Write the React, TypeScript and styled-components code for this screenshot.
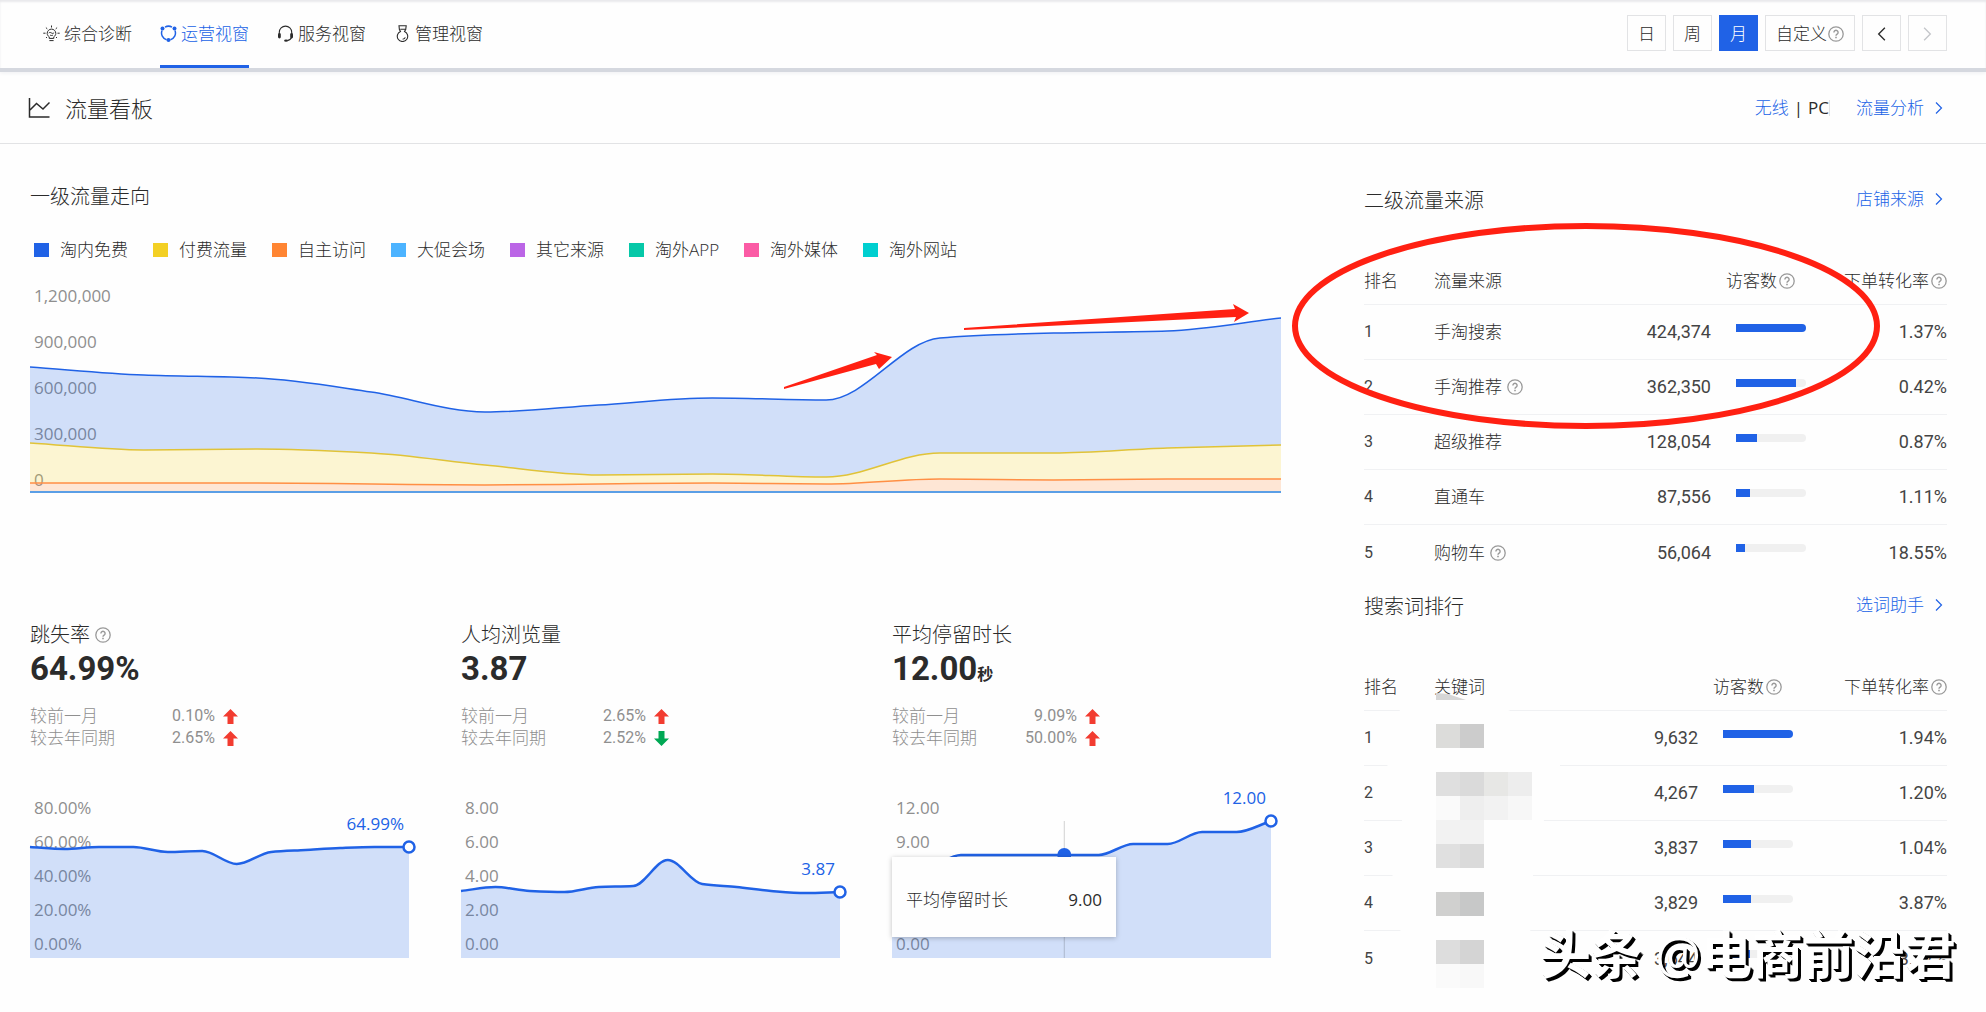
import React from "react";
import styled, { createGlobalStyle, css } from "styled-components";

const blue = "#2062e6";
const ink = "#2b2b2b";
const muted = "#8f8f8f";
const line = "#e2e3e5";
const marker = "#ff2012";
const textFont = `"Open Sans", "Noto Sans CJK SC", sans-serif`;
const digitFont = `Roboto, "Noto Sans CJK SC", sans-serif`;

const GlobalStyle = createGlobalStyle`
  * { box-sizing: border-box; }
  body {
    margin: 0;
    background: #fefefe;
    color: ${ink};
    font-family: ${textFont};
    font-size: 17px;
    font-weight: 300;
    line-height: 24px;
  }
  button { font: inherit; color: inherit; }
  a { color: inherit; text-decoration: none; }
  svg { display: block; flex: none; }
`;

/* ---------- shell ---------- */

const Page = styled.div`
  position: relative;
  padding-bottom: 26px;
  overflow: hidden;
`;

const TopBar = styled.header`
  display: flex;
  justify-content: space-between;
  height: 72px;
  padding: 0 39px 0 43px;
  border-bottom: 4px solid #d5d8df;
  box-shadow: inset 0 2px 2px #e9e9ec, 0 1px 4px #eeeff2;
`;

const Tabs = styled.nav`
  display: flex;
  gap: 28px;
`;

const Tab = styled.a<{ $active?: boolean }>`
  display: flex;
  align-items: center;
  gap: 4px;
  padding-top: 2px;
  border-bottom: 3px solid transparent;
  ${(p) =>
    p.$active &&
    css`
      color: ${blue};
      border-color: ${blue};
    `}
`;

const Periods = styled.div`
  display: flex;
  gap: 7px;
  padding-top: 15px;
`;

const PeriodButton = styled.button<{ $active?: boolean }>`
  display: flex;
  align-items: center;
  justify-content: center;
  gap: 1px;
  height: 36px;
  min-width: 39px;
  padding: 2px 10px 0;
  border: 1px solid ${(p) => (p.$active ? blue : line)};
  background: ${(p) => (p.$active ? blue : "transparent")};
  color: ${(p) => (p.$active ? "#ffffff" : ink)};
  &:disabled { color: #c4c6ca; }
`;

const BoardBar = styled.div`
  display: flex;
  justify-content: space-between;
  align-items: center;
  height: 72px;
  padding: 0 43px 0 28px;
  border-bottom: 1px solid ${line};
`;

const BoardTitle = styled.h1`
  display: flex;
  align-items: center;
  gap: 15px;
  margin: 0;
  font-size: 22px;
  font-weight: 300;
`;

const BoardLinks = styled.div`
  display: flex;
  align-items: center;
  gap: 26px;
`;

const Terminal = styled.div`
  display: flex;
  align-items: center;
  gap: 5px;
  line-height: 16px;
  border-right: 1px solid ${line};
`;

const TextButton = styled.button<{ $active?: boolean }>`
  padding: 0;
  border: 0;
  background: none;
  color: ${(p) => (p.$active ? blue : ink)};
`;

const Latin = styled.span`
  font-weight: 400;
`;

const MoreLink = styled.a`
  display: flex;
  align-items: center;
  gap: 11px;
  height: 24px;
  color: ${blue};
`;

const Board = styled.main`
  display: grid;
  grid-template-columns: minmax(0, 1251fr) minmax(0, 583fr);
  column-gap: 83px;
  padding: 0 39px 0 30px;
`;

const Heading = styled.h2`
  display: flex;
  align-items: center;
  gap: 5px;
  margin: 0;
  font-size: 20px;
  font-weight: 300;
  line-height: 28px;
`;

/* ---------- trend ---------- */

const Trend = styled.section`
  padding-top: 39px;
`;

const Legend = styled.ul`
  display: flex;
  gap: 25px;
  margin: 27px 0 19px;
  padding: 0 4px;
  list-style: none;
`;

const LegendItem = styled.li`
  display: flex;
  align-items: center;
  gap: 11px;
`;

const Swatch = styled.span<{ $color: string }>`
  width: 15px;
  height: 14px;
  background: ${(p) => p.$color};
`;

const Plot = styled.svg`
  width: 100%;
  height: auto;
  overflow: visible;
  font-size: 17px;
  font-weight: 400;
`;

const Metrics = styled.div`
  display: grid;
  grid-template-columns: repeat(3, minmax(0, 1fr));
  gap: 52px;
  margin-top: 124px;
  padding-right: 10px;
`;

const Metric = styled.section`
  position: relative;
`;

const MetricValue = styled.div`
  height: 40px;
  font: 700 33px/40px ${digitFont};
`;

const Unit = styled.small`
  font-size: 16px;
  line-height: 16px;
`;

const Deltas = styled.dl`
  margin: 16px 0 35px;
  color: ${muted};
  line-height: 22px;
`;

const Delta = styled.div`
  display: flex;
  align-items: center;
  gap: 8px;
`;

const DeltaName = styled.dt`
  width: 105px;
`;

const DeltaValue = styled.dd`
  width: 72px;
  margin: 0;
  font-family: ${digitFont};
  font-size: 16px;
  font-weight: 400;
  text-align: right;
`;

const Tooltip = styled.div`
  position: absolute;
  left: 0;
  bottom: 23px;
  display: flex;
  justify-content: space-between;
  align-items: center;
  width: 224px;
  height: 80px;
  padding: 6px 14px 0;
  background: #fefefe;
  box-shadow: 0 1px 5px rgba(0, 0, 0, 0.25);
`;

/* ---------- ranking ---------- */

const Side = styled.aside`
  position: relative;
  padding-top: 43px;
`;

const Panel = styled.section`
  position: relative;
  margin-bottom: 13px;
`;

const PanelHead = styled.div`
  display: flex;
  align-items: flex-start;
  justify-content: space-between;
  height: 28px;
  margin-bottom: 44px;
  padding-right: 4px;
`;

const Table = styled.table`
  width: 100%;
  table-layout: fixed;
  border-spacing: 0;
  tr > * {
    height: 55px;
    padding: 0;
    border-bottom: 1px solid #f0f1f3;
    font-weight: 300;
    text-align: left;
  }
  thead th {
    height: 46px;
    padding-bottom: 2px;
  }
  tbody tr:last-child > * { border-bottom: 0; }
`;

const RankCol = styled.col`
  width: 70px;
`;

const BarCol = styled.col`
  width: 95px;
`;

const RateCol = styled.col<{ $width: number }>`
  width: ${(p) => p.$width}px;
`;

const Label = styled.span<{ $gap: number; $inset?: number; $end?: boolean }>`
  display: flex;
  align-items: center;
  justify-content: ${(p) => (p.$end ? "flex-end" : "flex-start")};
  gap: ${(p) => p.$gap}px;
  padding-right: ${(p) => p.$inset || 0}px;
  white-space: nowrap;
`;

const Digits = styled.span<{ $size: number; $end?: boolean }>`
  display: block;
  font-family: ${digitFont};
  font-size: ${(p) => p.$size}px;
  font-weight: 400;
  color: #444444;
  text-align: ${(p) => (p.$end ? "right" : "left")};
`;

const Track = styled.div`
  width: 70px;
  height: 8px;
  margin: 0 0 9px 25px;
  border-radius: 0 4px 4px 0;
  background: #f0f0f0;
  overflow: hidden;
`;

const Bar = styled.div`
  height: 100%;
  background: ${blue};
`;

const Ring = styled.svg`
  position: absolute;
  left: -73px;
  top: 78px;
  pointer-events: none;
`;

const Mosaic = styled.svg`
  position: absolute;
  left: 22px;
  top: 98px;
  pointer-events: none;
`;

const Watermark = styled.div`
  position: absolute;
  right: 30px;
  bottom: 39px;
  color: #ffffff;
  font: 700 51px/64px "Open Sans", "Noto Sans CJK SC", sans-serif;
  text-shadow: 1px 1px 0 #000000, 2px 2px 0 #000000, 3px 3px 0 #000000;
  white-space: nowrap;
`;

const At = styled.span`
  font-weight: 400;
`;

/* ---------- icons ---------- */

const Help = () => (
  <svg width="16" height="16" viewBox="0 0 16 16" fill="none" stroke="#999" strokeWidth="1.3">
    <circle cx="8" cy="8" r="7.2" />
    <path d="M5.9 6.4a2.1 2.1 0 1 1 3.2 1.8c-.8.5-1.1.8-1.1 1.6" strokeWidth="1.4" />
    <path d="M8 10.8v1.5" strokeWidth="1.6" />
  </svg>
);

const Chevron = ({ back, size = 12 }: { back?: boolean; size?: number }) => (
  <svg width={size === 12 ? 8 : 9} height={size} viewBox="0 0 8 12" fill="none" stroke="currentColor" strokeWidth="1.2">
    <path d={back ? "M7 .5 1.5 6 7 11.5" : "M1 .5 6.5 6 1 11.5"} />
  </svg>
);

const BulbIcon = () => (
  <svg width="17" height="17" viewBox="0 0 17 17" fill="none" stroke="currentColor" strokeWidth="1">
    <path d="M6.2 11.8c-1.2-.8-2-2-2-3.4a4.3 4.3 0 0 1 8.6 0c0 1.4-.8 2.6-2 3.4v1.6H6.2zM6.4 15.6h4.2M5.8 8c1-.9 1.7-.6 2.7 0s1.7.5 2.6-.3M7 10c1 .7 2 .7 3 0" />
    <path d="M8.5.5v2M2.9 2.6l1.4 1.3M14.1 2.6l-1.400 1.300M.3 8.200h2.200M14.500 8.200h2.200M3 12.900l1-.8M14 12.900l-1-.8" />
  </svg>
);

const CycleIcon = () => (
  <svg width="17" height="17" viewBox="0 0 17 17" fill="none" stroke="currentColor" strokeWidth="1.500">
    <path d="M5 2.100a7.200 7.200 0 0 1 7 0M15 5.500a7 7 0 0 1-4.600 9.200M6.600 14.700A7 7 0 0 1 2 5.500" />
    <g fill="currentColor" stroke="none">
      <circle cx="2.500" cy="3.500" r="2" />
      <circle cx="14.500" cy="3.500" r="2" />
      <circle cx="8.500" cy="15" r="2" />
    </g>
  </svg>
);

const HeadsetIcon = () => (
  <svg width="17" height="17" viewBox="0 0 17 17" fill="none" stroke="currentColor" strokeWidth="1.100">
    <path d="M2.300 8.500V7.300a6.200 6.200 0 0 1 12.400 0v1.200M14.800 12c-.8 1.900-2.400 3.300-4.600 3.600" />
    <g fill="currentColor" stroke="none">
      <rect x="1" y="8" width="2.800" height="5.500" rx="1.400" />
      <rect x="13.200" y="8" width="2.800" height="5.500" rx="1.400" />
      <ellipse cx="9" cy="15.600" rx="1.900" ry="1.200" />
    </g>
  </svg>
);

const MedalIcon = () => (
  <svg width="17" height="17" viewBox="0 0 17 17" fill="none" stroke="currentColor" strokeWidth="1.100">
    <path d="M5 .8h7.200l-.5 3.700-1.200 2a5.200 5.200 0 1 1-4 0l-1.100-2zM6.300 4.200h4.800M8.600 14.200c1.300 0 2.300-.7 2.700-1.800" />
  </svg>
);

const TrendIcon = () => (
  <svg width="22" height="22" viewBox="0 0 22 22" fill="none" stroke="currentColor" strokeWidth="1.500">
    <path d="M1.500 1v19h20M2 13l6.500-6.500 6.500 5.500 6.500-6.500" />
  </svg>
);

const DeltaArrow = ({ down }: { down?: boolean }) => (
  <svg width="15" height="15" viewBox="0 0 15 15" fill={down ? "#00a854" : "#f23c30"}>
    <path d={down ? "M4.500 0h6v7.500H15L7.500 15 0 7.500h4.500z" : "M4.500 15h6V7.500H15L7.500 0 0 7.500h4.500z"} />
  </svg>
);

/* ---------- curves ---------- */

type Point = [number, number];

const spread = (ys: number[], width: number): Point[] =>
  ys.map((y, i) => [(i * width) / (ys.length - 1), y]);

/* Monotone cubic through the points, so that flat stretches stay flat. */
function curve(points: Point[]): string {
  const n = points.length;
  const slopes = points.slice(1).map((p, i) => (p[1] - points[i][1]) / (p[0] - points[i][0]));
  const tangents = points.map((_, i) => {
    if (i === 0) return slopes[0];
    if (i === n - 1) return slopes[n - 2];
    const a = slopes[i - 1];
    const b = slopes[i];
    return a * b <= 0 ? 0 : (2 * a * b) / (a + b);
  });
  return points.slice(1).reduce((d, p, i) => {
    const q = points[i];
    const h = (p[0] - q[0]) / 3;
    return `${d}C${q[0] + h} ${q[1] + h * tangents[i]} ${p[0] - h} ${p[1] - h * tangents[i + 1]} ${p[0]} ${p[1]}`;
  }, `M${points[0][0]} ${points[0][1]}`);
}

const band = (top: Point[], bottom: Point[]) =>
  `${curve(top)}L${curve([...bottom].reverse()).slice(1)}Z`;

/* ---------- data ---------- */

const legend = [
  ["淘内免费", "#2062e6"],
  ["付费流量", "#f3d024"],
  ["自主访问", "#ff8533"],
  ["大促会场", "#4cb3ff"],
  ["其它来源", "#bb65e6"],
  ["淘外APP", "#06c8a8"],
  ["淘外媒体", "#fb5ba5"],
  ["淘外网站", "#00cfd0"],
];

const trend = {
  free: spread([86, 94, 97, 111, 131, 124, 117, 119, 57, 52, 50, 37], 1251),
  paid: spread([162, 169, 168, 172, 184, 194, 193, 196, 172, 172, 167, 164], 1251),
  direct: spread([202, 202, 202, 203, 204, 203, 202, 203, 198, 199, 198, 198], 1251),
  base: spread([211, 211], 1251),
};

const trendTicks = ["1,200,000", "900,000", "600,000", "300,000", "0"];

interface MetricData {
  name: string;
  value: string;
  unit?: string;
  help?: boolean;
  month: string;
  year: string;
  yearDown?: boolean;
  ticks: string[];
  ys: number[];
  last: string;
  hover?: { index: number; value: string };
}

/* An empty tick is one that the open tooltip covers. */
const metrics: MetricData[] = [
  {
    name: "跳失率",
    value: "64.99%",
    help: true,
    month: "0.10%",
    year: "2.65%",
    ticks: ["80.00%", "60.00%", "40.00%", "20.00%", "0.00%"],
    ys: [63, 65, 63, 63, 68, 67, 80, 68, 66, 64, 63, 63],
    last: "64.99%",
  },
  {
    name: "人均浏览量",
    value: "3.87",
    month: "2.65%",
    year: "2.52%",
    yearDown: true,
    ticks: ["8.00", "6.00", "4.00", "2.00", "0.00"],
    ys: [107, 103, 107, 108, 103, 102, 76, 100, 103, 107, 109, 108],
    last: "3.87",
  },
  {
    name: "平均停留时长",
    value: "12.00",
    unit: "秒",
    month: "9.09%",
    year: "50.00%",
    ticks: ["12.00", "9.00", "", "", "0.00"],
    ys: [83, 83, 71, 71, 71, 71, 71, 60, 60, 48, 48, 37],
    last: "12.00",
    hover: { index: 5, value: "9.00" },
  },
];

interface Row {
  name: string;
  help?: boolean;
  visitors: string;
  share: number;
  rate: string;
}

const sources: Row[] = [
  { name: "手淘搜索", visitors: "424,374", share: 100, rate: "1.37%" },
  { name: "手淘推荐", help: true, visitors: "362,350", share: 86, rate: "0.42%" },
  { name: "超级推荐", visitors: "128,054", share: 30, rate: "0.87%" },
  { name: "直通车", visitors: "87,556", share: 20, rate: "1.11%" },
  { name: "购物车", help: true, visitors: "56,064", share: 13, rate: "18.55%" },
];

const keywords: Row[] = [
  { name: "", visitors: "9,632", share: 100, rate: "1.94%" },
  { name: "", visitors: "4,267", share: 44, rate: "1.20%" },
  { name: "", visitors: "3,837", share: 40, rate: "1.04%" },
  { name: "", visitors: "3,829", share: 40, rate: "3.87%" },
  { name: "", visitors: "3,644", share: 38, rate: "3.17%" },
];

/* column, row, colour of each blurred-out cell */
const mosaicCells: [number, number, string][] = [
  [0, 0, "#dcdcda"], [1, 0, "#cccccc"],
  [0, 2, "#dfdfdf"], [1, 2, "#dadada"], [2, 2, "#e7e7e5"], [3, 2, "#ededed"],
  [0, 3, "#fafafa"], [1, 3, "#eeeeee"], [2, 3, "#f2f2f2"], [3, 3, "#f7f7f7"],
  [0, 4, "#f2f2f2"], [1, 4, "#f2f2f2"],
  [0, 5, "#e0e0e0"], [1, 5, "#dadada"],
  [0, 7, "#d0d0cf"], [1, 7, "#c7c8c8"],
  [0, 9, "#dddddd"], [1, 9, "#d4d4d4"],
  [0, 10, "#fafafa"], [1, 10, "#f8f8f8"],
];

/* ---------- parts ---------- */

const TrendPlot = () => (
  <Plot viewBox="0 0 1251 216" role="img" aria-label="一级流量走向">
    <g fill={muted}>
      {trendTicks.map((t, i) => (
        <text key={t} x="4" y={21 + i * 46}>{t}</text>
      ))}
    </g>
    <g fillOpacity="0.2">
      <path d={band(trend.free, trend.paid)} fill={blue} />
      <path d={band(trend.paid, trend.direct)} fill="#f3d024" />
      <path d={band(trend.direct, trend.base)} fill="#ff8533" />
    </g>
    <g fill="none" strokeWidth="1.500">
      <path d={curve(trend.direct)} stroke="#ff8f45" />
      <path d={curve(trend.paid)} stroke="#e0c338" />
      <path d={curve(trend.free)} stroke={blue} />
      <path d={curve(trend.base)} stroke="#5b9fe6" strokeWidth="2" />
    </g>
    <g fill={marker}>
      <path d="M754 106 847 74 844 71 862 76 849 88 846 83 754 108z" />
      <path d="M934 47 1205 28 1203 23 1219 32 1204 41 1206 36 934 49z" />
    </g>
  </Plot>
);

const MetricPlot = ({ data }: { data: MetricData }) => {
  const points = spread(data.ys, 379);
  const end = points[points.length - 1];
  const hover = data.hover && points[data.hover.index];
  return (
    <Plot viewBox="0 0 379 176" role="img" aria-label={data.name}>
      <g fill={muted}>
        {data.ticks.map((t, i) => (
          <text key={i} x="4" y={30 + i * 34}>{t}</text>
        ))}
      </g>
      <path d={`${curve(points)}V174H0Z`} fill={blue} fillOpacity="0.2" />
      {hover && <path d={`M${hover[0]} 37V174`} stroke="#000" strokeOpacity="0.18" />}
      <path d={curve(points)} fill="none" stroke={blue} strokeWidth="2.500" />
      {hover && <circle cx={hover[0]} cy={hover[1]} r="7" fill={blue} />}
      <circle cx={end[0]} cy={end[1]} r="5.500" fill="#fff" stroke={blue} strokeWidth="2.500" />
      <text x="374" y={end[1] - 17} textAnchor="end" fill={blue}>{data.last}</text>
    </Plot>
  );
};

const MetricCard = ({ data }: { data: MetricData }) => (
  <Metric>
    <Heading>{data.name}{data.help && <Help />}</Heading>
    <MetricValue>{data.value}{data.unit && <Unit>{data.unit}</Unit>}</MetricValue>
    <Deltas>
      <Delta>
        <DeltaName>较前一月</DeltaName>
        <DeltaValue>{data.month}</DeltaValue>
        <DeltaArrow />
      </Delta>
      <Delta>
        <DeltaName>较去年同期</DeltaName>
        <DeltaValue>{data.year}</DeltaValue>
        <DeltaArrow down={data.yearDown} />
      </Delta>
    </Deltas>
    <MetricPlot data={data} />
    {data.hover && (
      <Tooltip role="tooltip">
        <span>{data.name}</span>
        <Latin>{data.hover.value}</Latin>
      </Tooltip>
    )}
  </Metric>
);

const Ranking = (props: {
  title: string;
  link: string;
  column: string;
  rateWidth: number;
  rows: Row[];
  children?: React.ReactNode;
}) => (
  <Panel>
    <PanelHead>
      <Heading>{props.title}</Heading>
      <MoreLink href="#">{props.link}<Chevron /></MoreLink>
    </PanelHead>
    <Table>
      <colgroup>
        <RankCol />
        <col />
        <col />
        <BarCol />
        <RateCol $width={props.rateWidth} />
      </colgroup>
      <thead>
        <tr>
          <th scope="col">排名</th>
          <th scope="col">{props.column}</th>
          <th scope="col" colSpan={2}>
            <Label $gap={2} $inset={11} $end>访客数<Help /></Label>
          </th>
          <th scope="col">
            <Label $gap={2} $end>下单转化率<Help /></Label>
          </th>
        </tr>
      </thead>
      <tbody>
        {props.rows.map((row, i) => (
          <tr key={i}>
            <td><Digits $size={16}>{i + 1}</Digits></td>
            <td><Label $gap={5}>{row.name}{row.help && <Help />}</Label></td>
            <td><Digits $size={18} $end>{row.visitors}</Digits></td>
            <td><Track><Bar style={{ width: `${row.share}%` }} /></Track></td>
            <td><Digits $size={18} $end>{row.rate}</Digits></td>
          </tr>
        ))}
      </tbody>
    </Table>
    {props.children}
  </Panel>
);

export default function App() {
  return (
    <Page>
      <GlobalStyle />
      <TopBar>
        <Tabs>
          <Tab href="#"><BulbIcon />综合诊断</Tab>
          <Tab href="#" $active aria-current="page"><CycleIcon />运营视窗</Tab>
          <Tab href="#"><HeadsetIcon />服务视窗</Tab>
          <Tab href="#"><MedalIcon />管理视窗</Tab>
        </Tabs>
        <Periods>
          <PeriodButton>日</PeriodButton>
          <PeriodButton>周</PeriodButton>
          <PeriodButton $active>月</PeriodButton>
          <PeriodButton>自定义<Help /></PeriodButton>
          <PeriodButton aria-label="上一月"><Chevron back size={14} /></PeriodButton>
          <PeriodButton aria-label="下一月" disabled><Chevron size={14} /></PeriodButton>
        </Periods>
      </TopBar>

      <BoardBar>
        <BoardTitle><TrendIcon />流量看板</BoardTitle>
        <BoardLinks>
          <Terminal>
            <TextButton $active>无线</TextButton>
            <Latin>|</Latin>
            <TextButton><Latin>PC</Latin></TextButton>
          </Terminal>
          <MoreLink href="#">流量分析<Chevron /></MoreLink>
        </BoardLinks>
      </BoardBar>

      <Board>
        <Trend>
          <Heading>一级流量走向</Heading>
          <Legend>
            {legend.map(([name, color]) => (
              <LegendItem key={name}><Swatch $color={color} />{name}</LegendItem>
            ))}
          </Legend>
          <TrendPlot />
          <Metrics>
            {metrics.map((m) => <MetricCard key={m.name} data={m} />)}
          </Metrics>
        </Trend>

        <Side>
          <Ranking title="二级流量来源" link="店铺来源" column="流量来源" rateWidth={141} rows={sources} />
          <Ranking title="搜索词排行" link="选词助手" column="关键词" rateWidth={154} rows={keywords}>
            <Mosaic width="180" height="300" viewBox="0 0 180 300">
              <path d="M50 10C80-4 150 22 174 60V76C160 110 156 140 146 190V230C140 270 124 298 86 298S20 270 12 230L6 180 16 130V124L2 80Q-4 30 22 12z" fill="#fefefe" />
              <path d="M50 2 62 3 80 9H50z" fill="#d6d6d6" />
              {mosaicCells.map(([c, r, fill]) => (
                <rect key={`${c}-${r}`} x={50 + c * 24} y={33 + r * 24} width="24" height="24" fill={fill} />
              ))}
            </Mosaic>
          </Ranking>
          <Ring width="590" height="208" viewBox="0 0 590 208">
            <ellipse cx="295" cy="104" rx="291" ry="100" fill="none" stroke={marker} strokeWidth="6" />
          </Ring>
        </Side>
      </Board>
      <Watermark>头条 <At>@</At>电商前沿君</Watermark>
    </Page>
  );
}
